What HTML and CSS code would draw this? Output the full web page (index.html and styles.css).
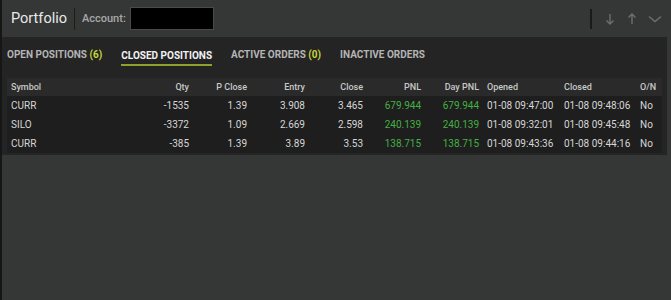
FILE: index.html
```html
<!DOCTYPE html>
<html lang="en">
<head>
<meta charset="UTF-8">
<meta name="viewport" content="width=device-width, initial-scale=1.0">
<title>Portfolio</title>
<link rel="stylesheet" href="styles.css">
</head>
<body>
<div class="app">
  <div class="topbar">
    <div class="title">Portfolio</div>
    <div class="account">
      <span class="account-label">Account:</span>
      <span class="account-box"></span>
    </div>
    <div class="tools">
      <span class="tool-sep"></span>
      <svg class="tool" width="14" height="14" viewBox="0 0 14 14"><path d="M7 2v10M3.5 8.5L7 12l3.5-3.5" fill="none" stroke="currentColor" stroke-width="1.4"/></svg>
      <svg class="tool" width="14" height="14" viewBox="0 0 14 14"><path d="M7 12V2M3.5 5.5L7 2l3.5 3.5" fill="none" stroke="currentColor" stroke-width="1.4"/></svg>
      <svg class="tool" width="16" height="14" viewBox="0 0 16 14"><path d="M2 4.5l6 5 6-5" fill="none" stroke="currentColor" stroke-width="1.4"/></svg>
    </div>
  </div>

  <div class="panel">
    <div class="tabs">
      <div class="tab">Open Positions <span class="count">(6)</span></div>
      <div class="tab active">Closed Positions</div>
      <div class="tab">Active Orders <span class="count">(0)</span></div>
      <div class="tab">Inactive Orders</div>
    </div>

    <table class="positions">
      <colgroup>
        <col style="width:120px">
        <col style="width:66px">
        <col style="width:58px">
        <col style="width:58px">
        <col style="width:58px">
        <col style="width:58px">
        <col style="width:58px">
        <col style="width:77px">
        <col style="width:76px">
        <col style="width:26px">
      </colgroup>
      <thead>
        <tr>
          <th>Symbol</th>
          <th class="num">Qty</th>
          <th class="num">P Close</th>
          <th class="num">Entry</th>
          <th class="num">Close</th>
          <th class="num">PNL</th>
          <th class="num">Day PNL</th>
          <th>Opened</th>
          <th>Closed</th>
          <th>O/N</th>
        </tr>
      </thead>
      <tbody>
        <tr>
          <td>CURR</td>
          <td class="num">-1535</td>
          <td class="num">1.39</td>
          <td class="num">3.908</td>
          <td class="num">3.465</td>
          <td class="num gain">679.944</td>
          <td class="num gain">679.944</td>
          <td>01-08 09:47:00</td>
          <td>01-08 09:48:06</td>
          <td>No</td>
        </tr>
        <tr>
          <td>SILO</td>
          <td class="num">-3372</td>
          <td class="num">1.09</td>
          <td class="num">2.669</td>
          <td class="num">2.598</td>
          <td class="num gain">240.139</td>
          <td class="num gain">240.139</td>
          <td>01-08 09:32:01</td>
          <td>01-08 09:45:48</td>
          <td>No</td>
        </tr>
        <tr>
          <td>CURR</td>
          <td class="num">-385</td>
          <td class="num">1.39</td>
          <td class="num">3.89</td>
          <td class="num">3.53</td>
          <td class="num gain">138.715</td>
          <td class="num gain">138.715</td>
          <td>01-08 09:43:36</td>
          <td>01-08 09:44:16</td>
          <td>No</td>
        </tr>
      </tbody>
    </table>
  </div>
</div>
</body>
</html>
```

FILE: styles.css
```css
html, body {
    margin: 0;
    padding: 0;
    height: 100%;
}

body {
    background-color: #353736;
    font-family: Roboto, "Liberation Sans", sans-serif;
    color: #ddd;
}

.app {
    height: 100%;
    border-left: 2px solid #161616;
    box-sizing: border-box;
}

.topbar {
    height: 37px;
    display: flex;
    align-items: center;
    padding: 0 8px 0 9px;
}

.title {
    font-size: 14.5px;
    color: #eaeaea;
    padding-right: 7px;
    border-right: 1px solid #1c1c1c;
    line-height: 22px;
}

.account {
    display: flex;
    align-items: center;
    margin-left: 7px;
}

.account-label {
    font-size: 11px;
    font-weight: 500;
    color: #a8a8a8;
}

.account-box {
    width: 82px;
    height: 21px;
    background: #000;
    border: 1px solid #4a4a4a;
    margin-left: 4px;
}

.tools {
    margin-left: auto;
    display: flex;
    align-items: center;
    gap: 8px;
    color: #6d6f6e;
}

.tool-sep {
    width: 2px;
    height: 20px;
    background: #1a1a1a;
    margin-right: 3px;
}

.panel {
    background-color: #242424;
    margin-right: 4px;
    padding: 0 3px 2px 5px;
}

.tabs {
    display: flex;
    height: 34px;
    align-items: center;
    gap: 19px;
    margin-bottom: 7px;
}

.tab {
    font-size: 10px;
    font-weight: 700;
    text-transform: uppercase;
    color: #b4b4b4;
    padding: 3px 0;
}

.tab .count {
    color: #c6d43c;
}

.tab.active {
    color: #f2f2f2;
    border-bottom: 2px solid #8ca22c;
    padding-bottom: 3px;
    margin-top: 4px;
}

.positions {
    width: 655px;
    border-collapse: collapse;
    table-layout: fixed;
    font-size: 10px;
}

.positions th {
    background-color: #2a2a2a;
    color: #c8c8c8;
    font-weight: 500;
    font-size: 9px;
    text-align: left;
    height: 18px;
    padding: 0 4px;
}

.positions td {
    background-color: #1e1e1e;
    color: #d6d6d6;
    height: 19px;
    padding: 0 4px;
    white-space: nowrap;
}

.positions .num {
    text-align: right;
}

.positions td.gain {
    color: #44b043;
}
```
